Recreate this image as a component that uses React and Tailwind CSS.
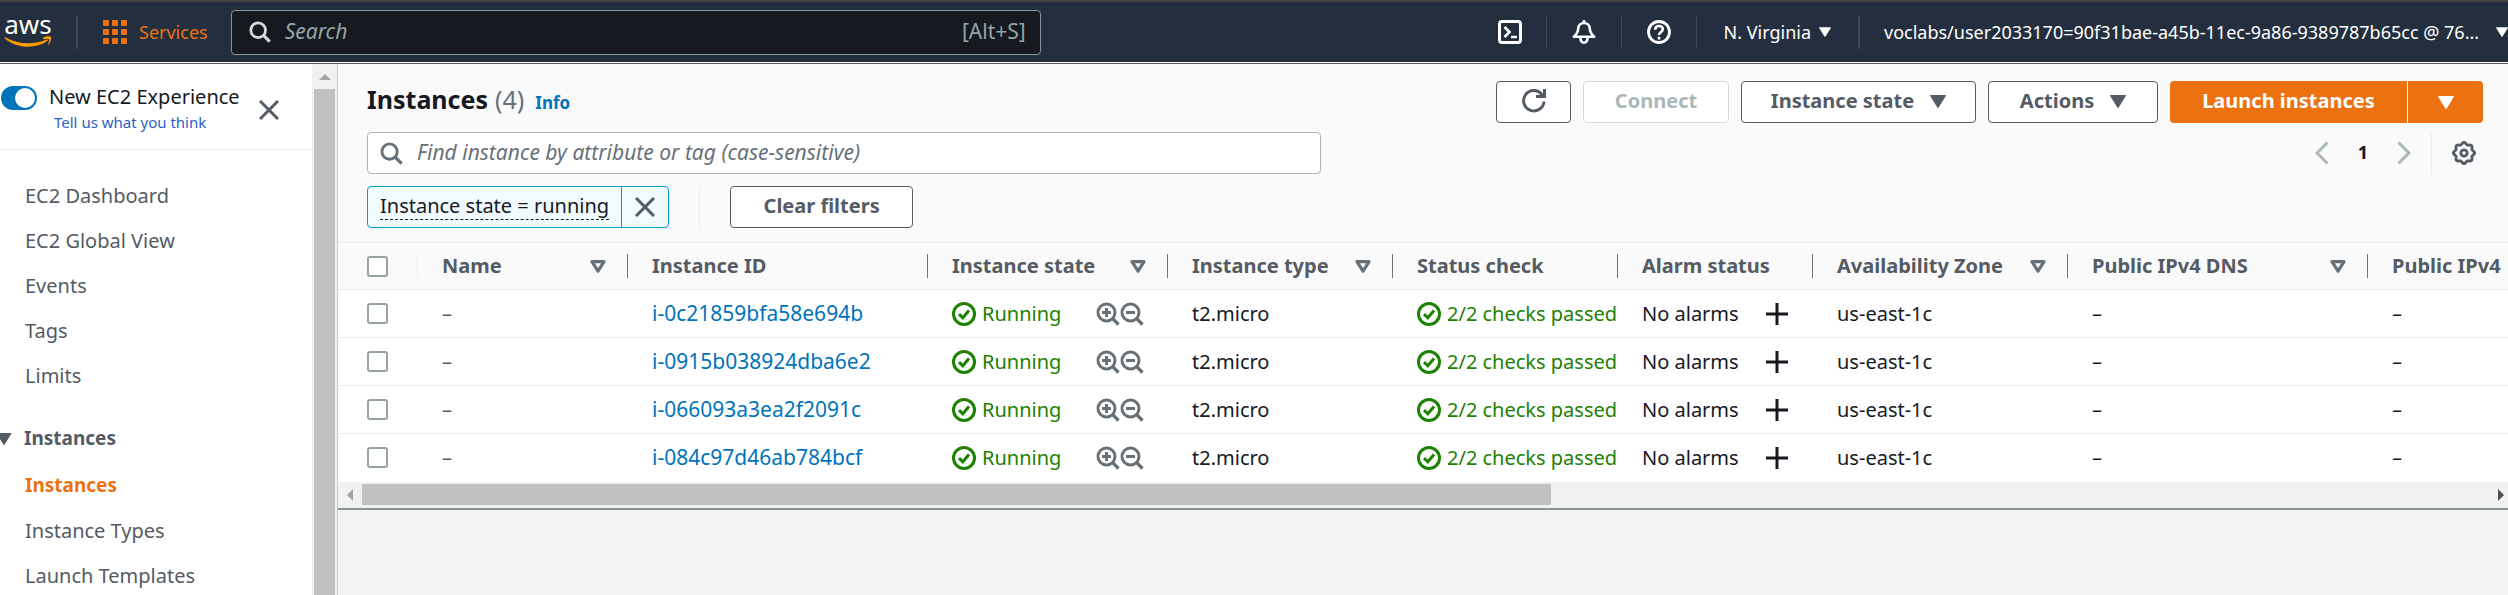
import { useState } from "react";

const AWS_FONT = "font-['Noto_Sans',sans-serif]";

const columns = [
  { label: "Name", width: "w-[210px]", filter: true, divider: true },
  { label: "Instance ID", width: "w-[300px]", filter: false, divider: true },
  { label: "Instance state", width: "w-60", filter: true, divider: true },
  { label: "Instance type", width: "w-[225px]", filter: true, divider: true },
  { label: "Status check", width: "w-[225px]", filter: false, divider: true },
  { label: "Alarm status", width: "w-[195px]", filter: false, divider: true },
  { label: "Availability Zone", width: "w-[255px]", filter: true, divider: true },
  { label: "Public IPv4 DNS", width: "w-[300px]", filter: true, divider: true },
  { label: "Public IPv4", width: "w-auto", filter: false, divider: false },
];

const instances = [
  "i-0c21859bfa58e694b",
  "i-0915b038924dba6e2",
  "i-066093a3ea2f2091c",
  "i-084c97d46ab784bcf",
];

function Caret({ className }) {
  return (
    <svg viewBox="0 0 16 13" className={className} fill="currentColor" aria-hidden="true">
      <path d="M0.8 0h14.4c.6 0 .9.6.6 1.1L8.7 12.5c-.3.6-1.1.6-1.4 0L.2 1.1C-.1.6.2 0 .8 0z" />
    </svg>
  );
}

function FilterIcon() {
  return (
    <svg viewBox="0 0 16 13" className="h-[13px] w-4 shrink-0 text-[#687078]" fill="none" stroke="currentColor" strokeWidth="3.2" strokeLinejoin="round" aria-hidden="true">
      <path d="M2 1.7h12L8 11.2z" />
    </svg>
  );
}

function SearchIcon({ className }) {
  return (
    <svg viewBox="0 0 24 24" className={className} fill="none" stroke="currentColor" strokeWidth="3" aria-hidden="true">
      <circle cx="10" cy="10" r="8" />
      <path d="M15.5 15.5 22.6 22.6" strokeWidth="3.4" />
    </svg>
  );
}

function CloseIcon() {
  return (
    <svg viewBox="0 0 20 20" className="size-5" fill="none" stroke="currentColor" strokeWidth="3" aria-hidden="true">
      <path d="M1 1 19 19M19 1 1 19" />
    </svg>
  );
}

function CheckCircle() {
  return (
    <svg viewBox="0 0 24 24" className="size-6 shrink-0" fill="none" stroke="currentColor" strokeWidth="3" aria-hidden="true">
      <circle cx="12" cy="12" r="10.5" />
      <path d="M7 12.2 10.8 15.8 17 8.6" />
    </svg>
  );
}

function Magnifier({ plus }) {
  return (
    <svg viewBox="0 0 24 24" className="size-6" fill="none" stroke="currentColor" strokeWidth="3" aria-hidden="true">
      <circle cx="10.5" cy="10.5" r="8.5" />
      <path d="M16.5 16.5 22.5 22.5" strokeWidth="3.4" />
      <path d={plus ? "M6 10.500h9M10.500 6v9" : "M6 10.500h9"} />
    </svg>
  );
}

const gearPoints = Array.from({ length: 72 }, (_, i) => {
  const angle = (i * Math.PI) / 36;
  const radius = 9.6 + 1 * Math.cos(8 * angle);
  return (12 + radius * Math.sin(angle)).toFixed(2) + "," + (12 - radius * Math.cos(angle)).toFixed(2);
}).join(" ");

function GearIcon() {
  return (
    <svg viewBox="0 0 24 24" className="size-6" fill="none" stroke="currentColor" strokeLinejoin="round" aria-hidden="true">
      <polygon points={gearPoints} strokeWidth="2.8" />
      <circle cx="12" cy="12" r="3.2" strokeWidth="2.8" />
    </svg>
  );
}

function AwsLogo() {
  return (
    <span className="flex w-12 flex-col items-center">
      <span className="mb-1 text-[26px] leading-4 text-white">aws</span>
      <svg viewBox="0 0 48 12" className="h-3 w-12" aria-hidden="true">
        <path d="M.6 2.2C.2 1.8.6 1 1.3 1.3 14 8.600 29.500 9.200 42.500 3.600c1-.4 1.900.7.900 1.400C31.500 13.400 12 12.600.6 2.200z" fill="#ff9900" />
        <path d="M39.300 1.600c2.200-1.500 7-1.600 7.700-.7.700.9-.3 5.800-2.600 7.900-.4.300-.7.100-.5-.3.600-1.400 1.700-4.300 1.200-5-.5-.7-3.700-.5-5.300-.3-.7.100-.9-.9-.5-1.600z" fill="#ff9900" />
      </svg>
    </span>
  );
}

function TopDivider() {
  return <span className="h-[33px] w-px shrink-0 bg-[#414750]" />;
}

function TopBar() {
  return (
    <header className="flex h-[62px] shrink-0 items-center border-t-2 border-[#444] bg-[#232f3e] pl-1 text-white">
      <a href="#home" aria-label="AWS home" className="shrink-0">
        <AwsLogo />
      </a>
      <span className="ml-6 h-[33px] w-0.5 shrink-0 bg-[#414750]" />
      <button type="button" className="ml-[25px] flex shrink-0 items-center gap-3 text-lg text-[#ec7211]">
        <svg viewBox="0 0 24 24" className="size-6" fill="currentColor" aria-hidden="true">
          {[0, 9, 18].map((y) => [0, 9, 18].map((x) => <rect key={x + "-" + y} x={x} y={y} width="6" height="6" rx="1" />))}
        </svg>
        Services
      </button>
      <label className="ml-[23px] flex h-[45px] w-[810px] min-w-0 items-center rounded-sm border border-[#879596] bg-[#16191f] pr-3.5 pl-[17px]">
        <SearchIcon className="size-[22px] shrink-0 text-[#d5dbdb]" />
        <input
          type="text"
          aria-label="Search"
          placeholder="Search"
          className="ml-3.5 min-w-0 flex-1 bg-transparent text-[21px] text-white italic outline-none placeholder:text-[#95a5a6]"
        />
        <span className="text-[21px] text-[#95a5a6]">[Alt+S]</span>
      </label>
      <div className="ml-auto flex shrink-0 items-center">
        <button type="button" aria-label="CloudShell" className="mr-6">
          <svg viewBox="0 0 24 24" className="size-6" fill="none" stroke="currentColor" strokeWidth="3" aria-hidden="true">
            <rect x="1.500" y="1.500" width="21" height="21" rx="2.500" />
            <path d="M6.500 7 11.500 12 6.500 17M13 17h6" strokeWidth="2.600" />
          </svg>
        </button>
        <TopDivider />
        <button type="button" aria-label="Notifications" className="mx-[25px]">
          <svg viewBox="0 0 24 24" className="size-6" fill="none" stroke="currentColor" strokeWidth="2.600" strokeLinejoin="round" aria-hidden="true">
            <path d="M12 0v3M1.800 16.700C5 14 6 11.500 6.200 8.500 6.500 5 9 3 12 3s5.500 2 5.800 5.500c.2 3 1.200 5.500 4.400 8.200z" />
            <path d="M8.600 17v2.300a3.400 3.400 0 0 0 6.800 0V17" />
          </svg>
        </button>
        <TopDivider />
        <button type="button" aria-label="Help" className="mx-[25px]">
          <svg viewBox="0 0 24 24" className="size-6" fill="none" stroke="currentColor" strokeWidth="2.800" aria-hidden="true">
            <circle cx="12" cy="12" r="10.500" />
            <path d="M8.200 9.800C8.200 7.300 9.800 6 12 6s3.800 1.300 3.800 3.300c0 2.700-3.800 2.700-3.800 5.700M12 16.800v2.700" strokeWidth="2.600" />
          </svg>
        </button>
        <TopDivider />
        <button type="button" className="mx-[27px] flex items-center gap-2 text-lg">
          N. Virginia <Caret className="h-2.5 w-3" />
        </button>
        <span className="h-[33px] w-0.5 bg-[#414750]" />
        <button type="button" className="ml-6 flex items-center gap-2 text-lg whitespace-nowrap">
          <span className="min-w-[604px] text-left">voclabs/user2033170=90f31bae-a45b-11ec-9a86-9389787b65cc @ 76...</span>
          <Caret className="h-2.5 w-3" />
        </button>
      </div>
    </header>
  );
}

function Sidebar() {
  const [isNew, setIsNew] = useState(true);
  return (
    <aside className="flex w-[338px] shrink-0 overflow-hidden border-r border-[#c4cccc] bg-white">
      <div className="min-w-0 flex-1">
        <div className="flex h-[86px] items-start border-b border-[#eaeded] pt-4 pl-px">
          <label className="flex items-start gap-3">
            <input type="checkbox" checked={isNew} onChange={() => setIsNew(!isNew)} className="peer sr-only" />
            <span className="mt-1.5 flex h-6 w-9 justify-end rounded-full bg-[#0073bb] p-0.5">
              <span className="size-5 rounded-full bg-white" />
            </span>
            <span className="flex flex-col">
              <span className="text-xl leading-[34px] text-[#16191f]">New EC2 Experience</span>
              <a href="#feedback" className="ml-[5px] text-[15px] leading-4 text-[#2962c4]">Tell us what you think</a>
            </span>
          </label>
          <button type="button" aria-label="Close navigation" className="mt-5 mr-[33px] ml-auto text-[#545b64]">
            <CloseIcon />
          </button>
        </div>
        <nav className="flex flex-col text-xl leading-[45px] text-[#545b64]">
          <div className="flex flex-col pt-[23px] pl-[25px]">
            <a href="#dashboard">EC2 Dashboard</a>
            <a href="#global">EC2 Global View</a>
            <a href="#events">Events</a>
            <a href="#tags">Tags</a>
            <a href="#limits">Limits</a>
          </div>
          <button type="button" className="mt-[18px] flex items-center gap-3 text-left text-[19px] font-bold">
            <Caret className="-ml-1 h-3 w-4" /> Instances
          </button>
          <div className="flex flex-col pt-0.5 pl-[25px]">
            <a href="#instances" className="text-[19px] font-bold text-[#ec7211]">Instances</a>
            <a href="#types">Instance Types</a>
            <a href="#templates">Launch Templates</a>
          </div>
        </nav>
      </div>
      <div className="flex w-[25px] flex-col items-center bg-[#f1f1f1] pt-2.5" aria-hidden="true">
        <svg viewBox="0 0 12 6" className="h-1.5 w-3" fill="#a3a3a3">
          <path d="M0 6 6 0 12 6z" />
        </svg>
        <div className="mt-[9px] w-[21px] flex-1 bg-[#c1c1c1]" />
      </div>
    </aside>
  );
}

const outlineButton =
  "flex h-[42px] items-center justify-center rounded-sm border border-[#545b64] bg-white pb-0.5 text-xl font-bold text-[#545b64]";

function Toolbar() {
  return (
    <div className="flex flex-col gap-[9px]">
      <div className="flex items-center justify-between">
        <h1 className="flex items-baseline gap-[7px] pb-0.5 text-[25px] leading-8 font-bold text-[#16191f]">
          <span>Instances</span>
          <span className="font-normal text-[#687078]">(4)</span>
          <a href="#info" className="ml-1 text-[17px] text-[#0073bb]">Info</a>
        </h1>
        <div className="flex gap-3">
          <button type="button" aria-label="Refresh" className={outlineButton + " w-[75px]"}>
            <svg viewBox="0 0 24 24" className="size-6" fill="none" stroke="currentColor" strokeWidth="3" aria-hidden="true">
              <path d="M22 12.500A10.200 10.200 0 1 1 19.500 5L21.500 7" />
              <path d="M22.500 0v7.500H14" />
            </svg>
          </button>
          <button type="button" disabled className="flex h-[42px] w-[146px] items-center justify-center rounded-sm border border-[#d5dbdb] bg-white pb-0.5 text-xl font-bold text-[#aab7b8]">
            Connect
          </button>
          <button type="button" className={outlineButton + " w-[235px] gap-4"}>
            Instance state <Caret className="h-[13px] w-4" />
          </button>
          <button type="button" className={outlineButton + " w-[170px] gap-4"}>
            Actions <Caret className="h-[13px] w-4" />
          </button>
          <div className="flex gap-px text-white">
            <button type="button" className="h-[42px] w-[237px] rounded-l-sm bg-[#ec7211] pb-0.5 text-xl font-bold">Launch instances</button>
            <button type="button" aria-label="More launch options" className="flex h-[42px] w-[75px] items-center justify-center rounded-r-sm bg-[#ec7211]">
              <Caret className="h-[13px] w-4" />
            </button>
          </div>
        </div>
      </div>
      <div className="flex items-center justify-between">
        <label className="flex h-[42px] w-[954px] items-center rounded-sm border border-[#aab7b8] bg-white pl-3">
          <SearchIcon className="size-[23px] shrink-0 text-[#687078]" />
          <input
            type="text"
            aria-label="Find instance"
            placeholder="Find instance by attribute or tag (case-sensitive)"
            className="ml-3.5 min-w-0 flex-1 bg-transparent text-[21px] italic outline-none placeholder:text-[#687078]"
          />
        </label>
        <div className="flex h-[42px] items-center">
          <button type="button" aria-label="Previous page" className="text-[#aab7b8]">
            <svg viewBox="0 0 14 24" className="h-6 w-3.5" fill="none" stroke="currentColor" strokeWidth="3" aria-hidden="true">
              <path d="M12.500 1.500 2 12 12.500 22.500" />
            </svg>
          </button>
          <button type="button" className="mx-[29px] pb-0.5 text-lg font-bold text-[#16191f]">1</button>
          <button type="button" aria-label="Next page" className="text-[#aab7b8]">
            <svg viewBox="0 0 14 24" className="h-6 w-3.5" fill="none" stroke="currentColor" strokeWidth="3" aria-hidden="true">
              <path d="M1.500 1.500 12 12 1.500 22.500" />
            </svg>
          </button>
          <span className="mx-5 h-[42px] w-px bg-[#eaeded]" />
          <button type="button" aria-label="Preferences" className="mr-[7px] text-[#545b64]">
            <GearIcon />
          </button>
        </div>
      </div>
      <div className="mt-[3px] flex items-center">
        <div className="flex h-[42px] overflow-hidden rounded-sm border border-[#00a1c9] bg-[#f1faff]">
          <button type="button" className="px-3 pb-0.5 text-xl text-[#16191f]">
            <span className="block border-b border-dashed border-[#16191f] leading-[26px]">Instance state = running</span>
          </button>
          <button type="button" aria-label="Remove filter" className="flex w-[47px] items-center justify-center border-l border-[#00a1c9] text-[#545b64]">
            <CloseIcon />
          </button>
        </div>
        <span className="mx-[30px] h-[42px] w-px bg-[#eaeded]" />
        <button type="button" className={outlineButton + " w-[183px]"}>Clear filters</button>
      </div>
    </div>
  );
}

function Check({ label }) {
  return (
    <input
      type="checkbox"
      aria-label={label}
      className="block size-[21px] appearance-none rounded-[3px] border-2 border-[#95a3a4] bg-white checked:bg-[#0073bb]"
    />
  );
}

function InstancesTable() {
  return (
    <div className="overflow-hidden">
      <table className="w-full table-fixed border-collapse text-left text-xl whitespace-nowrap text-[#16191f]">
        <thead className="bg-[#fafafa] text-[#545b64]">
          <tr className="h-[47px] border-y border-[#eaeded]">
            <th className="w-20 p-0">
              <div className="flex h-6 items-center justify-between border-r border-[#eaeded] pl-[29px]">
                <Check label="Select all instances" />
              </div>
            </th>
            {columns.map((c) => (
              <th key={c.label} className={"p-0 " + c.width}>
                <div className={"flex h-6 items-center justify-between pr-[21px] pl-6 " + (c.divider ? "border-r border-[#687078]" : "")}>
                  {c.label}
                  {c.filter && <FilterIcon />}
                </div>
              </th>
            ))}
          </tr>
        </thead>
        <tbody className="bg-white">
          {instances.map((id) => (
            <tr key={id} className="h-12 border-b border-[#eaeded] last:border-b-0">
              <td className="py-0 pr-0 pl-[29px]"><Check label={"Select " + id} /></td>
              <td className="py-0 pr-0 pl-6 text-[#545b64]">–</td>
              <td className="py-0 pr-0 pl-6"><a href={"#" + id} className="text-[21px] text-[#0073bb]">{id}</a></td>
              <td className="py-0 pr-0 pl-6">
                <div className="flex items-center gap-1.5 text-[#1d8102]">
                  <CheckCircle /> Running
                  <span className="mr-6 ml-auto flex text-[#687078]">
                    <button type="button" aria-label="Include running"><Magnifier plus /></button>
                    <button type="button" aria-label="Exclude running"><Magnifier /></button>
                  </span>
                </div>
              </td>
              <td className="py-0 pr-0 pl-6">t2.micro</td>
              <td className="py-0 pr-0 pl-6">
                <div className="flex items-center gap-1.5 overflow-hidden text-[#1d8102]">
                  <CheckCircle /> 2/2 checks passed
                </div>
              </td>
              <td className="py-0 pr-0 pl-6">
                <div className="flex items-center">
                  No alarms
                  <button type="button" aria-label={"Add alarm to " + id} className="mr-[25px] ml-auto">
                    <svg viewBox="0 0 22 22" className="size-[22px]" fill="none" stroke="currentColor" strokeWidth="3" aria-hidden="true">
                      <path d="M0 11h22M11 0v22" />
                    </svg>
                  </button>
                </div>
              </td>
              <td className="py-0 pr-0 pl-6">us-east-1c</td>
              <td className="py-0 pr-0 pl-6">–</td>
              <td className="py-0 pr-0 pl-6">–</td>
            </tr>
          ))}
        </tbody>
      </table>
      <div className="flex h-[26px] items-center bg-[#f1f1f1] pl-[9px]" aria-hidden="true">
        <svg viewBox="0 0 6 12" className="h-3 w-1.5" fill="#a3a3a3"><path d="M6 0 0 6 6 12z" /></svg>
        <div className="ml-[9px] h-[21px] w-[55%] bg-[#c1c1c1]" />
        <svg viewBox="0 0 6 12" className="mr-1 ml-auto h-3 w-1.5" fill="#505050"><path d="M0 0 6 6 0 12z" /></svg>
      </div>
    </div>
  );
}

export default function App() {
  return (
    <div className={"flex h-screen flex-col overflow-hidden bg-[#f2f3f3] " + AWS_FONT}>
      <TopBar />
      <div className="h-0.5 shrink-0 border-b border-[#545b64] bg-white" />
      <div className="flex min-h-0 flex-1">
        <Sidebar />
        <main className="min-w-0 flex-1">
          <section className="border-b-2 border-[#879596] bg-[#fafafa]">
            <div className="pt-[17px] pr-[25px] pb-3.5 pl-[29px]">
              <Toolbar />
            </div>
            <InstancesTable />
          </section>
        </main>
      </div>
    </div>
  );
}
